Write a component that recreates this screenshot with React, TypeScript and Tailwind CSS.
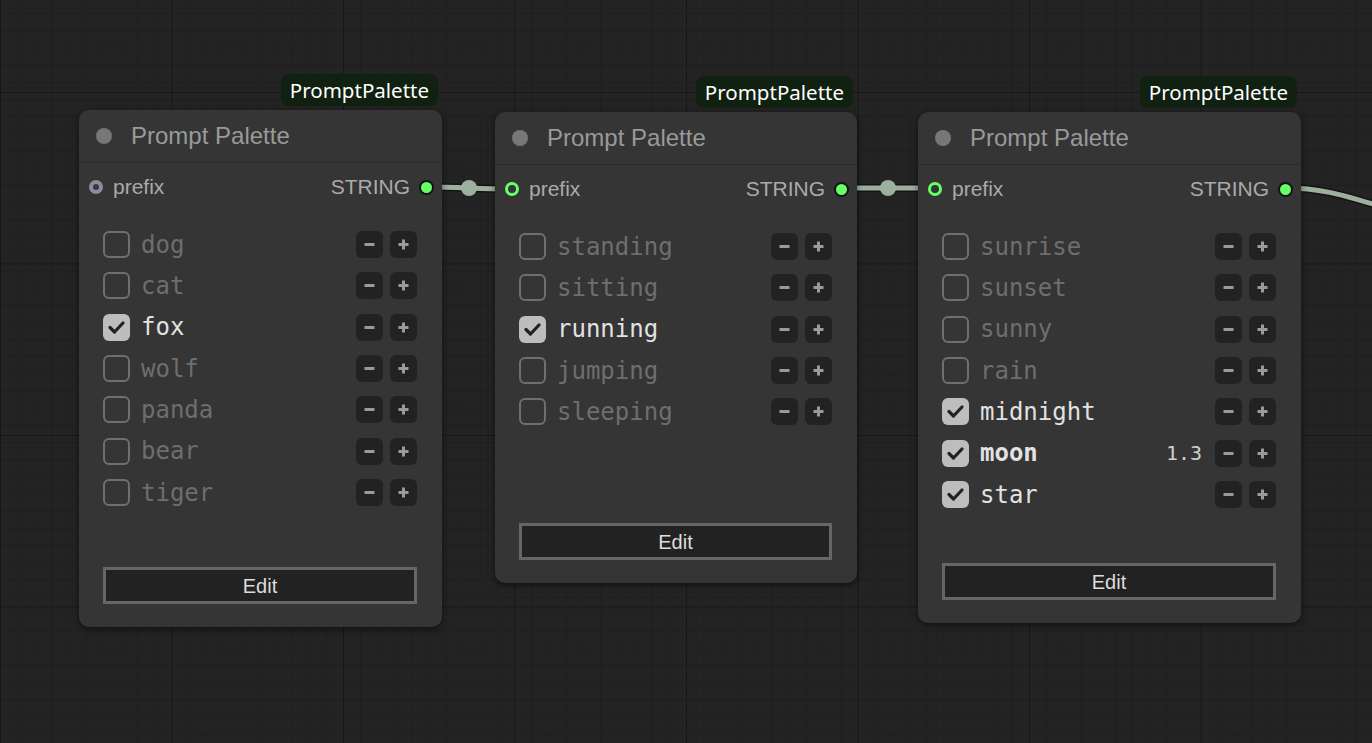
import React from 'react';

type Item = { label: string; checked?: boolean; bold?: boolean; weight?: string };

type NodeData = {
  pos: string; // absolute place + size on the canvas
  inputLinked: boolean;
  items: Item[];
};

const nodes: NodeData[] = [
  {
    pos: 'left-[79px] top-[110px] w-[363px] h-[517px]',
    inputLinked: false,
    items: [
      { label: 'dog' },
      { label: 'cat' },
      { label: 'fox', checked: true },
      { label: 'wolf' },
      { label: 'panda' },
      { label: 'bear' },
      { label: 'tiger' },
    ],
  },
  {
    pos: 'left-[495px] top-[112px] w-[362px] h-[471px]',
    inputLinked: true,
    items: [
      { label: 'standing' },
      { label: 'sitting' },
      { label: 'running', checked: true },
      { label: 'jumping' },
      { label: 'sleeping' },
    ],
  },
  {
    pos: 'left-[918px] top-[112px] w-[383px] h-[511px]',
    inputLinked: true,
    items: [
      { label: 'sunrise' },
      { label: 'sunset' },
      { label: 'sunny' },
      { label: 'rain' },
      { label: 'midnight', checked: true },
      { label: 'moon', checked: true, bold: true, weight: '1.3' },
      { label: 'star', checked: true },
    ],
  },
];

// Canvas grid + the links between nodes
function Canvas() {
  return (
    <svg className="absolute inset-0" width="1372" height="743">
      <defs>
        <pattern id="fine" width="17.15" height="17.15" x="0" y="7" patternUnits="userSpaceOnUse">
          <rect width="17.15" height="17.15" fill="#232323" />
          <path d="M0 0 H17.15 M0 0 V17.15" stroke="#1c1c1c" strokeWidth="1.2" />
        </pattern>
        <pattern id="major" width="171.5" height="171.5" x="0" y="92" patternUnits="userSpaceOnUse">
          <rect width="171.5" height="171.5" fill="url(#fine)" />
          <path d="M0 0 H171.5 M0 0 V171.5" stroke="#171717" strokeWidth="2" />
        </pattern>
      </defs>
      <rect width="1372" height="743" fill="url(#fine)" />
      <rect width="1372" height="743" fill="url(#major)" />

      {/* links */}
      {[
        'M426 187 C 460 187, 478 189, 512 189',
        'M841 188 C 870 188, 905 188, 935 188',
        'M1284 188 C 1325 188, 1345 196, 1400 212',
      ].map((d, i) => (
        <g key={i}>
          <path d={d} fill="none" stroke="#141414" strokeWidth="8" />
          <path d={d} fill="none" stroke="#9db09d" strokeWidth="5" />
        </g>
      ))}
      <circle cx="469" cy="188" r="8" fill="#9db09d" />
      <circle cx="888" cy="188" r="8" fill="#9db09d" />
    </svg>
  );
}

function StepButton({ plus }: { plus?: boolean }) {
  return (
    <div className="w-[27px] h-[27px] rounded-[6px] bg-[#222222] flex items-center justify-center">
      <svg width="11" height="11" viewBox="0 0 11 11">
        <rect x="0.5" y="4" width="10" height="3" fill="#9a9a9a" />
        {plus && <rect x="4" y="0.5" width="3" height="10" fill="#9a9a9a" />}
      </svg>
    </div>
  );
}

function Row({ item }: { item: Item }) {
  return (
    <div className="h-[41.33px] flex items-center">
      {item.checked ? (
        <div className="w-[27px] h-[27px] rounded-[6px] bg-[#bdbdbd] flex items-center justify-center">
          <svg width="27" height="27" viewBox="0 0 27 27">
            <path d="M7 13.5 L11.5 18 L20 9" fill="none" stroke="#222" strokeWidth="3.2" strokeLinecap="round" strokeLinejoin="round" />
          </svg>
        </div>
      ) : (
        <div className="w-[27px] h-[27px] rounded-[6px] border-2 border-[#6f6f6f]" />
      )}
      <span
        className={
          'ml-[11px] text-[24px] leading-none font-["DejaVu_Sans_Mono",monospace] ' +
          (item.checked ? 'text-[#e2e2e2] ' : 'text-[#6e6e6e] ') +
          (item.bold ? 'font-bold' : '')
        }
      >
        {item.label}
      </span>
      <div className="ml-auto flex items-center gap-[7px]">
        {item.weight && (
          <span className='mr-[6px] text-[20px] leading-none text-[#cfcfcf] font-["DejaVu_Sans_Mono",monospace]'>
            {item.weight}
          </span>
        )}
        <StepButton />
        <StepButton plus />
      </div>
    </div>
  );
}

function PaletteNode({ node }: { node: NodeData }) {
  return (
    <div
      className={
        'absolute ' +
        node.pos +
        ' rounded-[10px] bg-[#353535] shadow-[0_2px_6px_rgba(0,0,0,0.55)] flex flex-col font-["Liberation_Sans",Arial,sans-serif]'
      }
    >
      <div className='absolute bottom-full right-[4px] mb-[4px] h-[32px] px-[9px] rounded-[8px] bg-[#112111] flex items-center text-[20.5px] text-white font-["Noto_Sans",sans-serif]'>
        PromptPalette
      </div>

      <div className="h-[53px] flex items-center pl-[17px] border-b border-[#2b2b2b]">
        <div className="w-4 h-4 rounded-full bg-[#777777]" />
        <span className="ml-[19px] text-[24px] text-[#9a9a9a]">Prompt Palette</span>
      </div>

      <div className="h-[48px] flex items-center pl-[10px] pr-[8px]">
        {node.inputLinked ? (
          <div className="w-[14px] h-[14px] rounded-full border-[3.5px] border-[#66ff66] bg-[#353535]" />
        ) : (
          <div className="w-[14px] h-[14px] rounded-full border-[4px] border-[#8b8ba3] bg-[#3a3a3a]" />
        )}
        <span className="ml-[10px] text-[21px] text-[#aaaaaa]">prefix</span>
        <span className="ml-auto text-[21px] text-[#aaaaaa]">STRING</span>
        <div className="ml-[9px] w-[15px] h-[15px] rounded-full bg-[#66ff66] border-2 border-[#111]" />
      </div>

      <div className="pt-[13px] pl-[24px] pr-[25px] flex flex-col">
        {node.items.map((it) => (
          <Row key={it.label} item={it} />
        ))}
      </div>

      <div className="mt-auto mb-[23px] ml-[24px] mr-[25px] h-[37px] bg-[#222222] border-[3px] border-[#666666] flex items-center justify-center text-[20px] text-[#dddddd]">
        Edit
      </div>
    </div>
  );
}

export default function App() {
  return (
    <div className="relative w-[1372px] h-[743px] overflow-hidden bg-[#232323]">
      <Canvas />
      {nodes.map((n, i) => (
        <PaletteNode key={i} node={n} />
      ))}
    </div>
  );
}
